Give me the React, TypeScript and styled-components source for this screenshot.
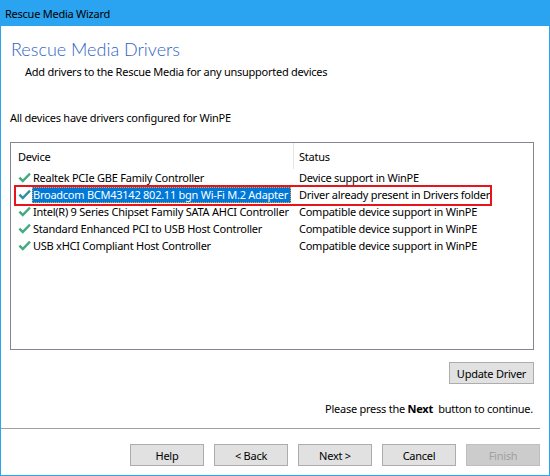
import React from 'react';
import styled, { createGlobalStyle } from 'styled-components';

const GlobalStyle = createGlobalStyle`
    html, body {
        margin: 0;
        padding: 0;
        background: #ffffff;
    }

    body {
        font-family: "Noto Sans", "Open Sans", sans-serif;
        font-size: 11px;
        letter-spacing: -0.25px;
        color: #000000;
    }
`;

const Window = styled.div`
    box-sizing: border-box;
    width: 550px;
    height: 476px;
    display: flex;
    flex-direction: column;
    border: 1px solid #2aa3f0;
    border-top: none;
    background: #ffffff;
`;

const TitleBar = styled.div`
    height: 26px;
    margin: 0 -1px;
    padding-left: 5px;
    display: flex;
    align-items: center;
    background: #2aa3f0;
    color: #000000;
`;

const Body = styled.div`
    display: flex;
    flex-direction: column;
    padding: 0 15px 0 9px;
`;

const Heading = styled.h1`
    margin: 11px 0 0 1px;
    font-family: Lato, "Noto Sans", sans-serif;
    font-size: 18px;
    font-weight: 300;
    letter-spacing: 0;
    line-height: 24px;
    color: #2f63c6;
`;

const SubHeading = styled.div`
    margin: 3px 0 0 15px;
    line-height: 16px;
`;

const Notice = styled.div`
    margin-top: 30px;
    line-height: 16px;
`;

const ListBox = styled.div`
    position: relative;
    margin-top: 16px;
    height: 206px;
    border: 1px solid #828790;
`;

const HeaderRow = styled.div`
    display: grid;
    grid-template-columns: 282px 1fr;
    height: 26px;
`;

const HeaderCell = styled.div<{ $divider?: boolean }>`
    display: flex;
    align-items: center;
    padding-left: ${p => (p.$divider ? '5px' : '7px')};
    border-left: ${p => (p.$divider ? '1px solid #e5e5e5' : 'none')};
    padding-top: 1px;
`;

const Row = styled.div`
    display: grid;
    grid-template-columns: 282px 1fr;
    height: 17px;
    align-items: center;
`;

const DeviceCell = styled.div`
    display: flex;
    align-items: center;
    padding-left: 7px;
    white-space: nowrap;
`;

const CheckIcon = styled.svg`
    flex-shrink: 0;
    display: block;
`;

const DeviceName = styled.span<{ $selected?: boolean }>`
    margin-left: 1px;
    padding: 0 3px 0 1px;
    line-height: 16px;
    background: ${p => (p.$selected ? '#0078d7' : 'transparent')};
    color: ${p => (p.$selected ? '#ffffff' : '#000000')};
    outline: ${p => (p.$selected ? '1px dotted #f0a030' : 'none')};
    outline-offset: -1px;
`;

const StatusCell = styled.div`
    padding-left: 6px;
    white-space: nowrap;
`;

const Highlight = styled.div`
    position: absolute;
    left: 3px;
    top: 42px;
    width: 474px;
    height: 17px;
    border: 2px solid #e8141c;
    pointer-events: none;
`;

const ActionRow = styled.div`
    display: flex;
    justify-content: flex-end;
    margin-top: 12px;
`;

const Button = styled.button<{ $wide?: boolean }>`
    box-sizing: border-box;
    width: ${p => (p.$wide ? '85px' : '74px')};
    height: 22px;
    padding: 0;
    border: 1px solid #adadad;
    background: #e1e1e1;
    font-family: inherit;
    font-size: 11px;
    letter-spacing: -0.25px;
    color: #000000;

    &:disabled {
        color: #a0a0a0;
        border-color: #bfbfbf;
        background: #cccccc;
    }
`;

const Hint = styled.div`
    margin-top: 17px;
    text-align: right;
    padding-right: 1px;
    line-height: 16px;

    b {
        font-weight: 700;
    }
`;

const Separator = styled.hr`
    margin: 11px 9px 0 0;
    border: none;
    border-top: 1px solid #a0a0a0;
`;

const Footer = styled.div`
    display: flex;
    justify-content: flex-end;
    gap: 10px;
    padding: 15px 9px 0 0;
`;

const Check = ({ selected }: { selected?: boolean }) => (
    <CheckIcon width="13" height="12" viewBox="0 0 13 12">
        <path
            d="M0.5 6.5 L2.3 4.8 L4.8 7.3 L11.2 0.8 L12.8 2.4 L4.8 10.8 Z"
            fill={selected ? '#2e8fa6' : '#45aa80'}
        />
    </CheckIcon>
);

const devices = [
    { name: 'Realtek PCIe GBE Family Controller', status: 'Device support in WinPE' },
    { name: 'Broadcom BCM43142 802.11 bgn Wi-Fi M.2 Adapter', status: 'Driver already present in Drivers folder', selected: true },
    { name: 'Intel(R) 9 Series Chipset Family SATA AHCI Controller', status: 'Compatible device support in WinPE' },
    { name: 'Standard Enhanced PCI to USB Host Controller', status: 'Compatible device support in WinPE' },
    { name: 'USB xHCI Compliant Host Controller', status: 'Compatible device support in WinPE' },
];

const App = () => {
    return (
        <>
            <GlobalStyle />
            <Window>
                <TitleBar>Rescue Media Wizard</TitleBar>
                <Body>
                    <Heading>Rescue Media Drivers</Heading>
                    <SubHeading>Add drivers to the Rescue Media for any unsupported devices</SubHeading>

                    <Notice>All devices have drivers configured for WinPE</Notice>

                    <ListBox>
                        <HeaderRow>
                            <HeaderCell>Device</HeaderCell>
                            <HeaderCell $divider>Status</HeaderCell>
                        </HeaderRow>
                        {devices.map(d => (
                            <Row key={d.name}>
                                <DeviceCell>
                                    <Check selected={d.selected} />
                                    <DeviceName $selected={d.selected}>{d.name}</DeviceName>
                                </DeviceCell>
                                <StatusCell>{d.status}</StatusCell>
                            </Row>
                        ))}
                        <Highlight />
                    </ListBox>

                    <ActionRow>
                        <Button $wide>Update Driver</Button>
                    </ActionRow>

                    <Hint>
                        Please press the <b>Next</b>&nbsp; button to continue.
                    </Hint>
                </Body>

                <Separator />

                <Footer>
                    <Button>Help</Button>
                    <Button>&lt; Back</Button>
                    <Button>Next &gt;</Button>
                    <Button>Cancel</Button>
                    <Button disabled>Finish</Button>
                </Footer>
            </Window>
        </>
    );
};

export default App;
